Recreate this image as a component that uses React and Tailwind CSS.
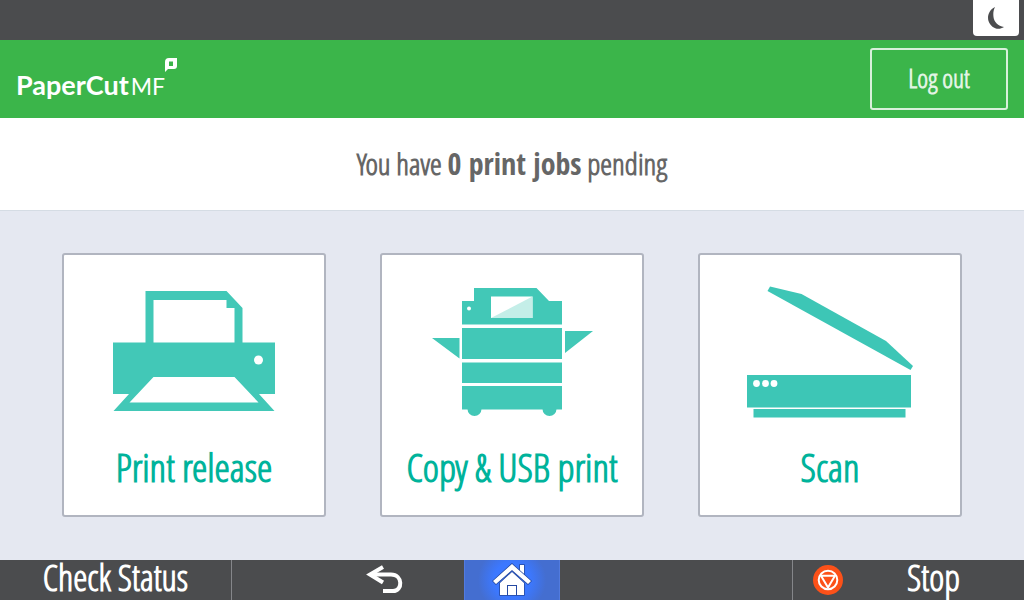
// PrinterHome.jsx
const TILES = [
  { name: "Print release", art: <PrinterArt /> },
  { name: "Copy & USB print", art: <CopierArt /> },
  { name: "Scan", art: <ScannerArt /> },
];

function PrinterArt() {
  return (
    <svg viewBox="0 0 260 180" className="w-full" fill="#42c8b7" aria-hidden="true">
      <path
        fillRule="evenodd"
        d="M81.500 36H162.500L178.500 53V87.500H211V139H195L210.500 156H49.500L65 139H49V87.500H81.500ZM89.500 45V87.500H170.500V53H162.500V45ZM89.500 122L65.500 147.500H194.500L170.500 122Z"
      />
      <circle cx="194.500" cy="105" r="4.500" fill="#fff" />
    </svg>
  );
}

function CopierArt() {
  return (
    <svg viewBox="0 0 260 180" className="w-full" fill="#42c8b7" aria-hidden="true">
      <path d="M92 33H154.500L167 46H180V69.500H80V46H92Z" />
      <path d="M80 73H180V104H80ZM80 107.500H180V128H80ZM80 131H180V154.500H80Z" />
      <path d="M50 83H77.500V103.500ZM183 76H211L183 98Z" />
      <path d="M85.500 154H99.500A7 7 0 0 1 85.500 154ZM160.500 154H174.500A7 7 0 0 1 160.500 154Z" />
      <path d="M109 41.500H150.500V63H109Z" fill="#fff" />
      <path d="M150.500 41.500V63H109Z" fill="#c4eee8" />
      <circle cx="87" cy="53.500" r="2" fill="#fff" />
    </svg>
  );
}

function ScannerArt() {
  return (
    <svg viewBox="0 0 260 180" className="w-full" fill="#3dc6b6" aria-hidden="true">
      <path d="M70 31.500L101.500 39L186 86L213 111L210.500 115L67.500 36Z" />
      <path d="M47 120H211V152.500H47ZM53.500 154H205.500V162.500H53.500Z" />
      <g fill="#fff">
        <circle cx="56.500" cy="128.500" r="3.400" />
        <circle cx="65.500" cy="128.500" r="3.400" />
        <circle cx="74" cy="128.500" r="3.400" />
      </g>
    </svg>
  );
}

function Logo() {
  return (
    <a href="#" aria-label="PaperCut MF" className="relative mt-3 flex items-baseline font-['Lato',sans-serif] text-[27px] leading-8 text-white">
      <span className="font-bold">PaperCut</span>
      <span className="ml-0.5 text-[23px] leading-8">MF</span>
      <svg viewBox="0 0 12 16" className="absolute -top-3 left-full h-4 w-3" aria-hidden="true">
        <path
          fill="#fff"
          fillRule="evenodd"
          d="M4 1H12V9Q12 12 9 12H3L0 15V5Q0 1 4 1ZM4 4.500V9H8V4.500Z"
        />
      </svg>
    </a>
  );
}

function BackIcon() {
  return (
    <svg viewBox="0 0 38 30" className="h-[30px] w-[38px]" fill="none" stroke="#fff" strokeWidth="4" aria-hidden="true">
      <path d="M6 9.500H26C38 9.500 38 26 28 26H18" />
      <path d="M18 2L5 9.500L18 17.500" />
    </svg>
  );
}

function HomeIcon() {
  return (
    <svg viewBox="0 0 40 34" className="h-[34px] w-10" aria-hidden="true">
      <g fill="#fff" stroke="#25479c" strokeWidth="1.500" paintOrder="stroke">
        <path d="M28 3H32V14L28 10Z" />
        <path d="M20 10L32 21V33H25V23H15V33H8V21Z" />
        <path d="M16 24H24V33H16Z" />
        <path d="M20 2L39 19L36 22L20 8L4 22L1 19Z" />
      </g>
    </svg>
  );
}

function StopIcon() {
  return (
    <svg viewBox="0 0 30 30" className="size-[30px]" fill="none" stroke="#fff" strokeWidth="2" aria-hidden="true">
      <circle cx="15" cy="15" r="15" fill="#fc5119" stroke="none" />
      <circle cx="15" cy="15" r="9.300" />
      <path d="M8 10.800H22L15 22.500Z" strokeLinejoin="round" />
    </svg>
  );
}

export default function App() {
  return (
    <div className="flex min-h-screen flex-col bg-[#e5e8f1] font-['Open_Sans_Condensed_Light','Lato',sans-serif] font-semibold">
      {/* Status strip */}
      <div className="flex h-10 items-start justify-end bg-[#4b4c4e] pr-[5px]">
        <button aria-label="Sleep" className="flex h-9 w-[46px] items-center justify-center rounded-b-sm bg-white">
          <svg viewBox="0 0 16 22" className="h-[22px] w-4" fill="#4b4c4e" aria-hidden="true">
            <path d="M7 0C1 3 -1 9 0.500 14C3 21 10 24 16 20C10 19 6 15 5.500 10C5 6 5.500 3 7 0Z" />
          </svg>
        </button>
      </div>

      {/* Brand header */}
      <header className="flex h-[78px] items-center justify-between bg-[#3bb54a] px-4 font-normal">
        <Logo />
        <button className="h-[62px] w-[138px] rounded-[3px] border-2 border-[#d8f0db] pb-0.5 text-[26px] leading-8 font-semibold text-[#e2f4e4]">
          Log out
        </button>
      </header>

      <p className="border-b border-[#d5dce4] bg-white py-6 text-center text-[30px] leading-[44px] text-[#666]">
        You have <b className="font-['Open_Sans_Condensed',sans-serif]">0 print jobs</b> pending
      </p>

      {/* Functions */}
      <main className="flex flex-1 items-start justify-center gap-[54px] pt-[42px]">
        {TILES.map((tile) => (
          <button
            key={tile.name}
            className="flex size-[264px] flex-col items-center rounded-[3px] border-2 border-[#b1b5c0] bg-white text-[#00b39b]"
          >
            {tile.art}
            <span className="mt-2 text-[39px] leading-[48px] whitespace-nowrap">{tile.name}</span>
          </button>
        ))}
      </main>

      {/* Panel keys */}
      <footer className="flex h-10 bg-[#4b4c4e] text-[36px] leading-9 text-white">
        <button className="w-[232px] border-r border-[#85868a] pb-1">Check Status</button>
        <div className="flex flex-1 justify-end">
          <button aria-label="Back" className="flex w-40 items-center justify-center">
            <BackIcon />
          </button>
          <button
            aria-label="Home"
            className="flex w-24 items-end justify-center border-x border-[#527bdf] bg-[radial-gradient(circle,#3c78ff_18px,#446ed0_34px)] pb-1"
          >
            <HomeIcon />
          </button>
          <div className="w-[232px]" />
        </div>
        <button className="flex w-[232px] items-center border-l border-[#85868a] pl-5">
          <StopIcon />
          <span className="flex-1 pb-1">Stop</span>
        </button>
      </footer>
    </div>
  );
}
